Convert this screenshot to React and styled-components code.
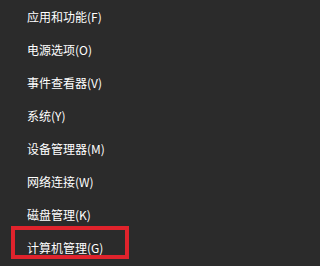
import React from "react";
import styled, { createGlobalStyle } from "styled-components";

const Global = createGlobalStyle`
  html, body { margin: 0; padding: 0; background: #2b2b2b; }
  body { width: 286px; height: 266px; overflow: hidden; }
`;

const Menu = styled.ul`
  list-style: none;
  margin: 0;
  padding: 0;
  width: 286px;
  height: 266px;
  background: #2b2b2b;
  display: flex;
  flex-direction: column;
`;

const Item = styled.li`
  position: relative;
  height: 33px;
  display: flex;
  align-items: center;
  padding-left: 27px;
  color: #ffffff;
  font-family: "Noto Sans CJK SC", "Microsoft YaHei", sans-serif;
  font-size: 12px;
  line-height: 1;
`;

const Highlight = styled.span`
  position: absolute;
  left: 11px;
  top: -5px;
  width: 118px;
  height: 33px;
  box-sizing: border-box;
  border: 4px solid #e0232c;
  pointer-events: none;
`;

const items = [
  "应用和功能(F)",
  "电源选项(O)",
  "事件查看器(V)",
  "系统(Y)",
  "设备管理器(M)",
  "网络连接(W)",
  "磁盘管理(K)",
  "计算机管理(G)",
];

export default function App() {
  return (
    <>
      <Global />
      <Menu>
        {items.map((label, i) => (
          <Item key={label}>
            {label}
            {i === items.length - 1 && <Highlight />}
          </Item>
        ))}
      </Menu>
    </>
  );
}
